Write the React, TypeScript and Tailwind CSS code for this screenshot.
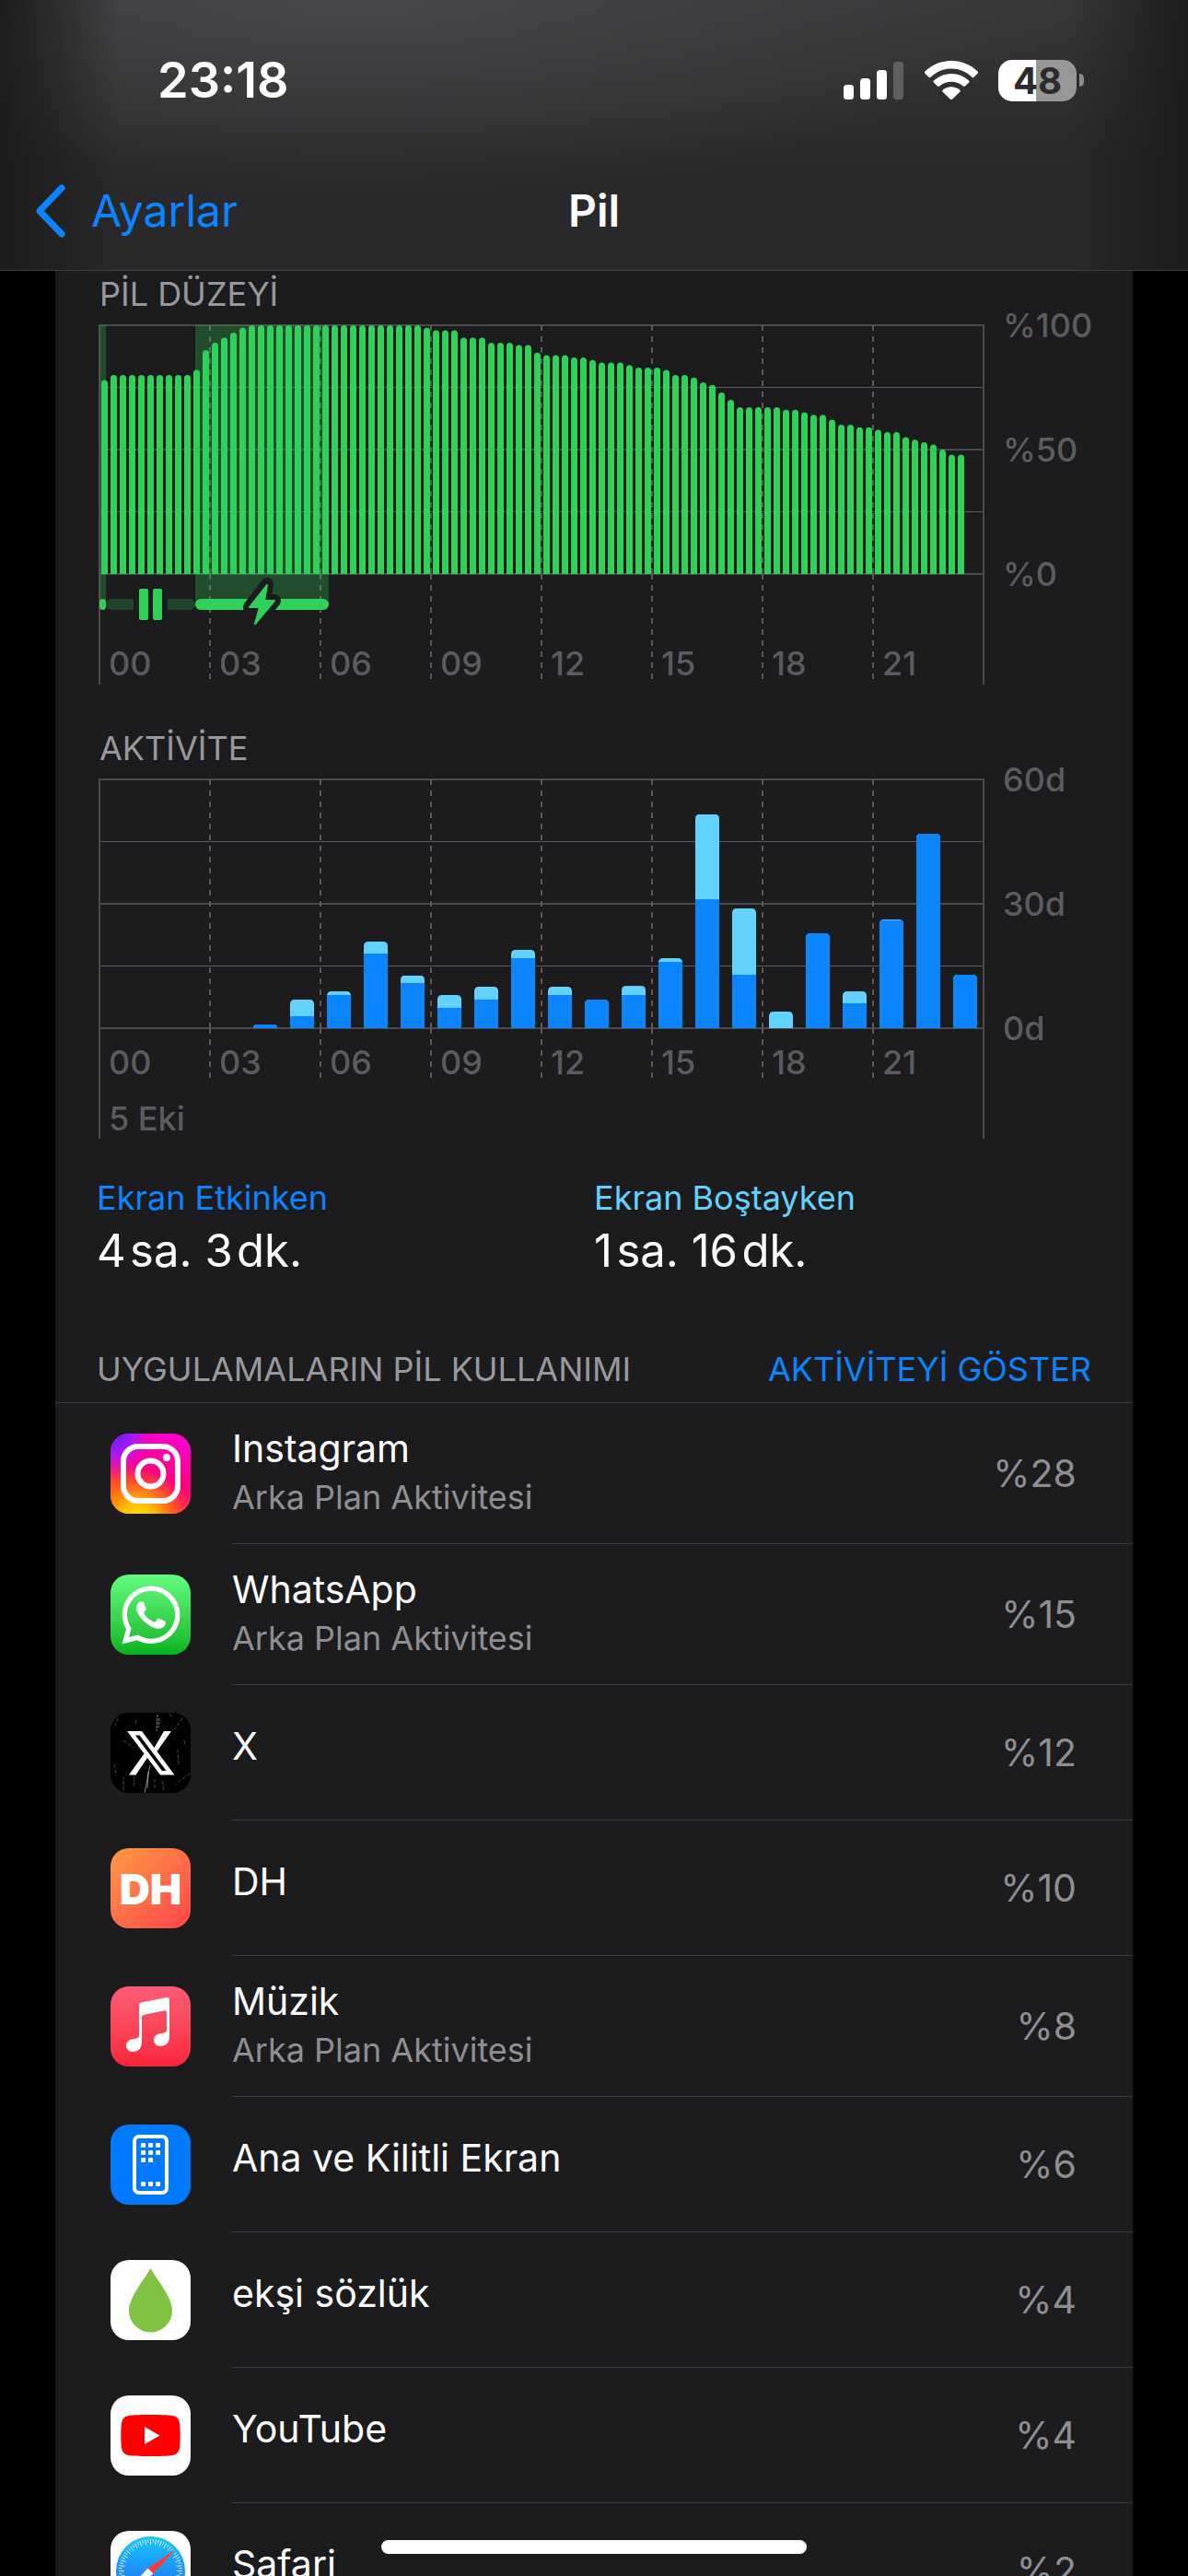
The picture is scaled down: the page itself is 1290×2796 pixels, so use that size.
import type { ReactNode } from "react";
import { FaWhatsapp } from "react-icons/fa";

const FONT = "font-['Inter','Liberation_Sans',sans-serif]";

/* ---------- battery level data (one sample per 15 minutes, value and run length) ---------- */
const LEVEL_RUNS: [number, number][] = [
  [78, 1], [80, 9], [82, 1], [90, 1], [93, 1], [95, 1], [97, 1], [99, 1], [100, 19],
  [99, 1], [98, 3], [95, 3], [93, 3], [92, 2], [89, 1], [88, 3], [87, 2], [86, 1],
  [85, 3], [84, 1], [83, 3], [82, 1], [80, 2], [79, 1], [77, 1], [76, 1], [73, 1],
  [70, 1], [67, 5], [66, 2], [65, 1], [64, 2], [62, 1], [60, 2], [59, 2], [58, 1],
  [57, 2], [55, 1], [54, 1], [53, 1], [52, 1], [50, 1], [48, 2],
];
const LEVELS = LEVEL_RUNS.flatMap(([value, count]) => Array<number>(count).fill(value));

/* hour, total minutes, minutes with the screen on */
const ACTIVITY: [number, number, number][] = [
  [4, 0.9, 0.9], [5, 6.9, 2.9], [6, 8.9, 8], [7, 20.9, 18], [8, 12.7, 10.9], [9, 8, 4.9],
  [10, 10, 6.9], [11, 18.9, 16.9], [12, 10, 8], [13, 6.9, 6.9], [14, 10.2, 8],
  [15, 16.9, 16], [16, 51.6, 31.1], [17, 28.9, 12.9], [18, 4, 0], [19, 22.9, 22.9],
  [20, 8.9, 6], [21, 26.2, 26], [22, 46.9, 46.9], [23, 12.9, 12.9],
];

const HOURS = ["00", "03", "06", "09", "12", "15", "18", "21"];
const PLOT_H = 270;

function roundedTop(x: number, y: number, w: number, h: number, r: number) {
  const q = Math.min(r, h);
  return `M${x} ${y + h}V${y + q}Q${x} ${y} ${x + q} ${y}H${x + w - q}Q${x + w} ${y} ${x + w} ${y + q}V${y + h}Z`;
}

function Grid({ bottom, dashBottom }: { bottom: number; dashBottom: number }) {
  return (
    <g stroke="#4b4b4e" fill="none">
      {[0, 135, 270].map((y) => (
        <path key={y} d={`M2 ${y + 2}H963`} strokeWidth="2" />
      ))}
      {[68, 203].map((y) => (
        <path key={y} d={`M2 ${y + 1.5}H963`} strokeWidth="1" stroke="#5e5e62" />
      ))}
      <path d={`M2 1V${bottom}M962 1V${bottom}`} strokeWidth="2" />
      {HOURS.slice(1).map((h, i) => (
        <path
          key={h}
          d={`M${122 + i * 120} 2V272M${122 + i * 120} 272V${dashBottom}`}
          strokeWidth="2"
          strokeDasharray="6 6"
          stroke="#5a5a5d"
        />
      ))}
    </g>
  );
}

function AxisText({ hoursY, labels }: { hoursY: number; labels: string[] }) {
  return (
    <g fill="#5b5b60" fontSize="36" fontWeight="500">
      {HOURS.map((h, i) => (
        <text key={h} x={12 + i * 120} y={hoursY}>{h}</text>
      ))}
      {labels.map((l, i) => (
        <text key={l} x={983} y={15 + i * 135}>{l}</text>
      ))}
    </g>
  );
}

function LevelChart() {
  return (
    <svg viewBox="0 0 1110 392" className="block w-full overflow-visible" role="img" aria-label="Pil düzeyi">
      <Grid bottom={392} dashBottom={386} />
      <rect x="2" y="2" width="7" height="303" fill="#30d158" fillOpacity="0.27" />
      <path d="M106 2H251V305H106Z" fill="#30d158" fillOpacity="0.27" />
      {LEVELS.map((v, i) => {
        const h = (v / 100) * PLOT_H;
        return <path key={i} d={roundedTop(4 + i * 10, 2 + PLOT_H - h, 7, h, 3.5)} fill="#30d158" />;
      })}
      <rect x="2" y="299" width="7" height="12" rx="3.5" fill="#30d158" />
      <path d="M39 299H15a6 6 0 0 0 0 12H39ZM76 299H100a6 6 0 0 1 0 12H76Z" fill="#21432a" />
      <rect x="45" y="288" width="10" height="34" rx="2" fill="#30d158" />
      <rect x="60" y="288" width="10" height="34" rx="2" fill="#30d158" />
      <rect x="106" y="299" width="145" height="12" rx="6" fill="#30d158" />
      <path
        d="M184 283L165 308H176L171 326L192 301H181Z"
        fill="#1c1c1e"
        stroke="#1c1c1e"
        strokeWidth="14"
        strokeLinejoin="round"
      />
      <path
        d="M184 284L165 308H176L171 326L192 301H181Z"
        fill="#30d158"
        stroke="#30d158"
        strokeWidth="2"
        strokeLinejoin="round"
      />
      <AxisText hoursY={382} labels={["%100", "%50", "%0"]} />
    </svg>
  );
}

function ActivityChart() {
  return (
    <svg viewBox="0 0 1110 392" className="block w-full overflow-visible" role="img" aria-label="Aktivite">
      <Grid bottom={392} dashBottom={326} />
      {ACTIVITY.map(([hour, total, on]) => {
        const th = (total / 60) * PLOT_H;
        const oh = (on / 60) * PLOT_H;
        const x = 9 + hour * 40;
        return (
          <g key={hour}>
            <clipPath id={`hour-${hour}`}>
              <path d={roundedTop(x, 272 - th, 26, th, 5)} />
            </clipPath>
            <g clipPath={`url(#hour-${hour})`}>
              <rect x={x} y={272 - th} width="26" height={th} fill="#64d2ff" />
              <rect x={x} y={272 - oh} width="26" height={oh} fill="#0a84ff" />
            </g>
          </g>
        );
      })}
      <AxisText hoursY={322} labels={["60d", "30d", "0d"]} />
      <text x="12" y="383" fill="#5b5b60" fontSize="36" fontWeight="500">5 Eki</text>
    </svg>
  );
}

/* ---------- app icons ---------- */
function InstagramIcon() {
  return (
    <svg viewBox="0 0 87 87" className="size-full">
      <defs>
        <linearGradient id="ig-base" x1="0.1" y1="1" x2="0.6" y2="0">
          <stop offset="0" stopColor="#ff8a00" />
          <stop offset="0.35" stopColor="#ff3a3a" />
          <stop offset="0.6" stopColor="#ff0080" />
          <stop offset="1" stopColor="#ff00c8" />
        </linearGradient>
        <radialGradient id="ig-yellow" cx="0.35" cy="1.05" r="0.6">
          <stop offset="0" stopColor="#ffdd00" />
          <stop offset="0.35" stopColor="#ffc400" stopOpacity="0.9" />
          <stop offset="1" stopColor="#ff6a00" stopOpacity="0" />
        </radialGradient>
        <radialGradient id="ig-purple" cx="0.02" cy="0" r="0.6">
          <stop offset="0" stopColor="#5a1cff" />
          <stop offset="0.45" stopColor="#a01cff" stopOpacity="0.9" />
          <stop offset="1" stopColor="#ff00c8" stopOpacity="0" />
        </radialGradient>
      </defs>
      <rect width="87" height="87" fill="url(#ig-base)" />
      <rect width="87" height="87" fill="url(#ig-yellow)" />
      <rect width="87" height="87" fill="url(#ig-purple)" />
      <rect x="14" y="14" width="59" height="59" rx="16" fill="none" stroke="#fff" strokeWidth="6" />
      <circle cx="43.500" cy="43.500" r="14" fill="none" stroke="#fff" strokeWidth="6" />
      <circle cx="61" cy="26" r="4" fill="#fff" />
    </svg>
  );
}

function XIcon() {
  return (
    <svg viewBox="0 0 87 87" className="size-full">
      <rect width="87" height="87" fill="#000" />
      <g stroke="#fff" fill="none" strokeWidth="1">
        <path d="M51 2L50 20M53 6L52 16" strokeDasharray="3 1" opacity="0.5" />
        <path d="M43 57L37 87M41 64L40 82" opacity="0.5" />
        <path
          d="M78 6L68 20M64 1L67 6M28 8L27 14M86 66L70 78M4 56L6 66M14 30L25 38M73 40L74 56M26 70L25 80M14 84V70M56 74L58 86M80 30L81 36M8 6L5 14M48 72V82"
          strokeDasharray="4 2"
          opacity="0.28"
        />
      </g>
      <path
        d="M18 20H34L47.500 38L58 20H66L50.500 42L69.500 67.500H54L40 49L27.500 67.500H20L36.500 44.500ZM27 24.500L56 63H60.500L31.500 24.500Z"
        fill="#fff"
        fillRule="evenodd"
      />
    </svg>
  );
}

function MusicIcon() {
  return (
    <svg viewBox="0 0 87 87" className="size-full">
      <path
        d="M31 20Q31 18 33 17.500L61 12Q64 11.500 64 14V55C64 61 60 65 54 65C50 65 47 62 47 58.500C47 54 50 52 54 51.300L58 50.500Q61 50 61 47V28Q61 26 59 26.300L36 31Q34 31.500 34 33.500V61C34 67 30 71 24 71C20 71 17 68 17 64.500C17 60 20 58 24 57.200L28 56.500Q31 56 31 53Z"
        fill="#fff"
      />
    </svg>
  );
}

function HomeScreenIcon() {
  const dots: [number, number][] = [
    [33, 20], [41, 20], [49, 20], [33, 28], [41, 28], [49, 28], [33, 36], [41, 36],
    [33, 62], [41, 62], [49, 62],
  ];
  return (
    <svg viewBox="0 0 87 87" className="size-full">
      <rect x="26" y="13" width="35" height="61" rx="5" fill="none" stroke="#fff" strokeWidth="4" />
      {dots.map(([x, y]) => (
        <rect key={`${x}-${y}`} x={x} y={y} width="5" height="5" rx="1" fill="#fff" />
      ))}
    </svg>
  );
}

function DropIcon() {
  return (
    <svg viewBox="0 0 87 87" className="size-full">
      <path d="M43.500 9C50 21 67 40 67 55A23.500 23.500 0 0 1 20 55C20 40 37 21 43.500 9Z" fill="#80c342" />
    </svg>
  );
}

function YouTubeIcon() {
  return (
    <svg viewBox="0 0 87 87" className="size-full">
      <path
        d="M43.500 21C56 21 65 21.400 69 22.500C72 23.300 74 25.500 74.700 28.500C76 34 76 53 74.700 58.500C74 61.500 72 63.700 69 64.500C65 65.600 56 66 43.500 66S22 65.600 18 64.500C15 63.700 13 61.500 12.300 58.500C11 53 11 34 12.300 28.500C13 25.500 15 23.300 18 22.500C22 21.400 31 21 43.500 21Z"
        fill="#f00"
      />
      <path d="M37 34L53.500 43.500L37 53Z" fill="#fff" />
    </svg>
  );
}

function SafariIcon() {
  return (
    <svg viewBox="0 0 87 87" className="size-full">
      <defs>
        <linearGradient id="safari-dial" x1="0" y1="0" x2="0" y2="1">
          <stop offset="0" stopColor="#19c8fb" />
          <stop offset="0.5" stopColor="#1e90f8" />
          <stop offset="1" stopColor="#1e6ff2" />
        </linearGradient>
      </defs>
      <circle cx="43.500" cy="43.500" r="37.500" fill="url(#safari-dial)" />
      <g stroke="#fff" strokeWidth="0.8">
        {Array.from({ length: 72 }, (_, i) => (
          <path key={i} d={i % 2 ? "M43.500 9V12.500" : "M43.500 9V15"} transform={`rotate(${i * 5} 43.500 43.500)`} />
        ))}
      </g>
      <path d="M70.500 20.500L40.500 40.500L46.500 46.500Z" fill="#ff3b30" />
      <path d="M16.500 66.500L40.500 40.500L46.500 46.500Z" fill="#fff" />
    </svg>
  );
}

interface AppRow {
  name: string;
  percent: string;
  background?: boolean;
  tile: string;
  icon: ReactNode;
}

const APPS: AppRow[] = [
  { name: "Instagram", percent: "%28", background: true, tile: "bg-[#ff0080]", icon: <InstagramIcon /> },
  {
    name: "WhatsApp", percent: "%15", background: true, tile: "bg-linear-to-b from-[#61fd7d] to-[#05b420]",
    icon: <FaWhatsapp className="size-[72px] text-white" />,
  },
  { name: "X", percent: "%12", tile: "bg-black", icon: <XIcon /> },
  {
    name: "DH", percent: "%10", tile: "bg-linear-to-br from-[#ff9a3f] via-[#ff6e4a] to-[#ff4446]",
    icon: <span className="text-[46px] leading-none font-black text-white">DH</span>,
  },
  { name: "Müzik", percent: "%8", background: true, tile: "bg-linear-to-b from-[#fb5c74] to-[#fa233b]", icon: <MusicIcon /> },
  { name: "Ana ve Kilitli Ekran", percent: "%6", tile: "bg-[#007aff]", icon: <HomeScreenIcon /> },
  { name: "ekşi sözlük", percent: "%4", tile: "bg-white", icon: <DropIcon /> },
  { name: "YouTube", percent: "%4", tile: "bg-white", icon: <YouTubeIcon /> },
  { name: "Safari", percent: "%2", tile: "bg-white", icon: <SafariIcon /> },
];

function AppItem({ app }: { app: AppRow }) {
  return (
    <li className="flex pl-[60px]">
      <div className={`my-[30px] flex size-[87px] shrink-0 items-center justify-center self-center overflow-hidden rounded-[20px] ${app.tile}`}>
        {app.icon}
      </div>
      <div
        className={`ml-[45px] flex flex-1 justify-between border-b border-[#3d3d41] pr-[61px] ${
          app.background ? "h-[153px]" : "h-[147px]"
        }`}
      >
        <div className={`flex flex-col ${app.background ? "pt-6" : "pt-[41px]"}`}>
          <span className="text-[41px] leading-[50px] text-white">{app.name}</span>
          {app.background && (
            <span className="mt-[6px] text-[36px] leading-[44px] text-[#8e8e93]">Arka Plan Aktivitesi</span>
          )}
        </div>
        <span className="self-center text-[41px] leading-[50px] text-[#8e8e93]">{app.percent}</span>
      </div>
    </li>
  );
}

/* ---------- status bar ---------- */
function StatusIcons() {
  return (
    <div className="flex items-center gap-[22px]">
      <svg viewBox="0 0 66 42" className="h-[42px] w-[66px]" aria-label="Sinyal">
        <rect x="0" y="26" width="11" height="16" rx="3.5" fill="#fff" />
        <rect x="18" y="19" width="11" height="23" rx="3.5" fill="#fff" />
        <rect x="36" y="10" width="11" height="32" rx="3.5" fill="#fff" />
        <rect x="54" y="1" width="11" height="41" rx="3.5" fill="#fff" fillOpacity="0.22" />
      </svg>
      <svg viewBox="0 0 58 42" className="h-[42px] w-[58px]" aria-label="Wi-Fi">
        <g fill="#fff">
          <path d="M29 0C40.500 0 50.500 4.500 57.500 11.500Q58.500 12.700 57.500 13.800L53.500 17.800Q52.500 18.700 51.400 17.800C45.500 12 37.700 8.600 29 8.600S12.500 12 6.600 17.800Q5.500 18.700 4.500 17.800L0.500 13.800Q-0.500 12.700 0.500 11.500C7.500 4.500 17.500 0 29 0Z" />
          <path d="M29 14C36.500 14 43.200 17 48 21.500Q49 22.600 48 23.700L44 27.600Q43 28.500 41.900 27.600C38.500 24.500 34 22.700 29 22.700S19.500 24.500 16.100 27.600Q15 28.500 14 27.600L10 23.700Q9 22.600 10 21.500C14.800 17 21.500 14 29 14Z" />
          <path d="M29 28.300C32.600 28.300 35.800 29.600 38.300 31.700Q39.300 32.700 38.300 33.800L30.300 41.500Q29 42.500 27.700 41.500L19.700 33.800Q18.700 32.700 19.700 31.700C22.200 29.600 25.400 28.300 29 28.300Z" />
        </g>
      </svg>
      <div className="flex items-center gap-[3px]">
        <div className="flex h-[45px] w-[85px] items-center justify-center rounded-[15px] bg-linear-to-r from-white from-48% to-[#979797] to-48%">
          <span className="text-[40px] leading-[45px] font-bold text-[#2b2b2d]">48</span>
        </div>
        <div className="h-[14px] w-[5px] rounded-r-full bg-[#8e8e8f]" />
      </div>
    </div>
  );
}

export default function App() {
  return (
    <div className={`relative flex h-screen flex-col overflow-hidden bg-black ${FONT}`}>
      <header className="shrink-0 border-b border-[#404042] bg-[#29292b] bg-[linear-gradient(to_right,rgba(27,27,27,0.95),rgba(27,27,27,0)_10%,rgba(27,27,27,0)_90%,rgba(27,27,27,0.95)),radial-gradient(ellipse_60%_70%_at_30%_0%,rgba(76,76,80,0.75),rgba(60,60,62,0)),linear-gradient(to_bottom,#37373a,#29292b_60%)]">
        <div className="flex items-center justify-between pt-[60px] pr-[113px] pl-[171px]">
          <time className="text-[54px] leading-[54px] font-semibold text-white">23:18</time>
          <StatusIcons />
        </div>
        <nav className="grid grid-cols-3 items-center px-[38px] pt-[80px] pb-[29px]">
          <a href="#ayarlar" className="flex items-center gap-7 text-[#0a84ff]">
            <svg viewBox="0 0 33 58" className="h-[58px] w-[33px]" aria-hidden="true">
              <path d="M29 4L5 29L29 54" fill="none" stroke="currentColor" strokeWidth="7" strokeLinecap="round" strokeLinejoin="round" />
            </svg>
            <span className="text-[48px] leading-[70px]">Ayarlar</span>
          </a>
          <h1 className="text-center text-[48px] leading-[70px] font-semibold text-white">Pil</h1>
        </nav>
      </header>

      <main className="mx-[60px] flex-1 bg-[#1c1c1e]">
        <section className="pr-[14px] pl-[46px]">
          <h2 className="pt-[3px] pl-[2px] text-[36px] leading-[44px] text-[#98989f]">PİL DÜZEYİ</h2>
          <div className="mt-[10px]">
            <LevelChart />
          </div>
          <h2 className="mt-[47px] pl-[2px] text-[36px] leading-[44px] text-[#98989f]">AKTİVİTE</h2>
          <div className="mt-[10px]">
            <ActivityChart />
          </div>
        </section>

        <dl className="grid grid-cols-2 px-[45px] pt-[42px]">
          <div>
            <dt className="text-[36px] leading-[44px] text-[#0a84ff]">Ekran Etkinken</dt>
            <dd className="mt-[6px] text-[49px] leading-[60px] text-white">4&#8202;sa. 3&#8202;dk.</dd>
          </div>
          <div>
            <dt className="text-[36px] leading-[44px] text-[#64d2ff]">Ekran Boştayken</dt>
            <dd className="mt-[6px] text-[49px] leading-[60px] text-white">1&#8202;sa. 16&#8202;dk.</dd>
          </div>
        </dl>

        <section>
          <div className="flex items-center justify-between border-b border-[#3d3d41] px-[45px] pt-[76px] pb-[14px]">
            <h2 className="text-[36px] leading-[44px] text-[#98989f]">UYGULAMALARIN PİL KULLANIMI</h2>
            <button type="button" className="text-[36px] leading-[44px] text-[#0a84ff]">AKTİVİTEYİ GÖSTER</button>
          </div>
          <ul>
            {APPS.map((app) => (
              <AppItem key={app.name} app={app} />
            ))}
          </ul>
        </section>
      </main>

      <div className="absolute bottom-6 left-1/2 h-[15px] w-[462px] -translate-x-1/2 rounded-full bg-white" />
    </div>
  );
}
